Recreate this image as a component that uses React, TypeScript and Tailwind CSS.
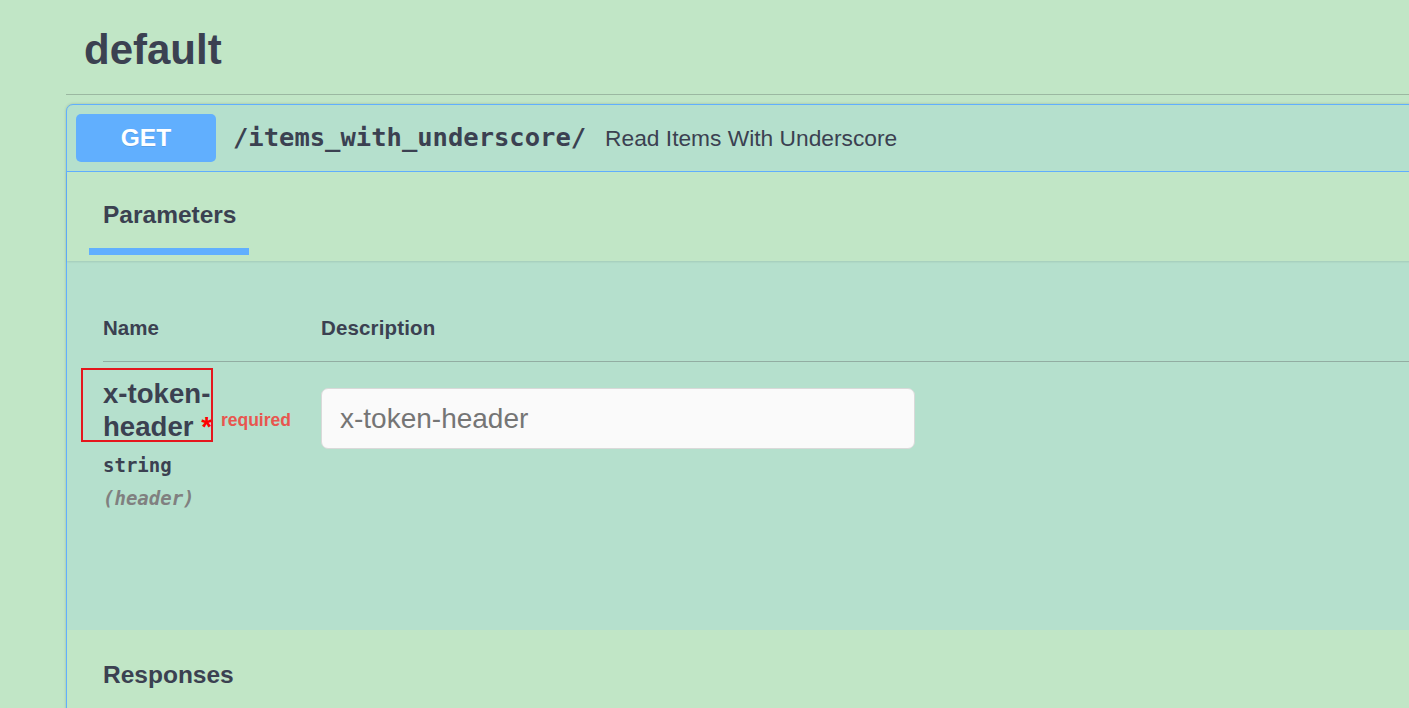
import React from "react";

export default function App() {
  return (
    <div className="w-[1409px] h-[708px] overflow-hidden bg-[#c1e6c6] text-[#3b4151] font-['Liberation_Sans',Arial,sans-serif]">
      <div className="pl-[66px]">
        <div className="w-[1360px]">
          {/* Tag heading */}
          <div className="h-[95px] border-b border-[#9bb8a1] pl-[18px] pt-[29px]">
            <h3 className="text-[42px] font-bold leading-[42px]">default</h3>
          </div>

          {/* Operation block */}
          <div className="mt-[9px] border border-[#61affe] rounded-[7px] bg-[#b5e0cd] shadow-[0_0_3px_rgba(0,0,0,0.19)]">
            {/* Summary */}
            <div className="h-[67px] border-b border-[#61affe] flex items-center pl-[9px]">
              <div className="w-[140px] h-[48px] rounded-[5px] bg-[#61affe] flex items-center justify-center text-white text-[24.5px] font-bold [text-shadow:0_1px_0_rgba(0,0,0,0.1)]">
                GET
              </div>
              <span className="ml-[17px] font-['DejaVu_Sans_Mono',monospace] font-bold text-[25.5px] leading-none">
                /items_with_underscore/
              </span>
              <span className="ml-[19px] text-[22.75px] leading-none">Read Items With Underscore</span>
            </div>

            {/* Section header: Parameters tab */}
            <div className="h-[89px] bg-[#c1e6c6] shadow-[0_1px_2px_rgba(0,0,0,0.1)] pl-[36px] pt-[29px] relative">
              <div className="text-[24.5px] font-bold leading-[28px]">Parameters</div>
              <div className="mt-[19px] -ml-[14px] w-[160px] h-[7px] bg-[#61affe]" />
            </div>

            {/* Parameters body */}
            <div className="h-[369px] pl-[36px] pt-[55px]">
              <div className="flex border-b border-[#92ada2] pb-[21px]">
                <div className="w-[218px] text-[20.5px] font-bold leading-[24px]">Name</div>
                <div className="text-[20.5px] font-bold leading-[24px] tracking-[0.15px]">Description</div>
              </div>
              <div className="flex pt-[15px]">
                <div className="w-[218px]">
                  <div className="relative">
                    <div className="text-[27.6px] font-bold leading-[33px] whitespace-nowrap">
                      x-token-
                      <br />
                      header<span className="text-[#ff0000]">&nbsp;*</span>
                      <span className="relative top-[-10px] pl-[9px] text-[17.5px] text-[#e8564f]">required</span>
                    </div>
                    <div className="absolute left-[-22px] top-[-9px] w-[132px] h-[74px] border-2 border-[#e5161d]" />
                  </div>
                  <div className="mt-[2px] font-['DejaVu_Sans_Mono',monospace] font-bold text-[19px] leading-[33px]">
                    string
                  </div>
                  <div className="font-['DejaVu_Sans_Mono',monospace] font-bold italic text-[19px] leading-[33px] text-[#808080]">
                    (header)
                  </div>
                </div>
                <div className="pt-[11px]">
                  <input
                    type="text"
                    placeholder="x-token-header"
                    className="w-[594px] h-[61px] border border-[#d9d9d9] rounded-[7px] bg-[#fafafa] px-[18px] text-[28px] placeholder:text-[#757575] outline-none font-['Liberation_Sans',Arial,sans-serif]"
                  />
                </div>
              </div>
            </div>

            {/* Responses header */}
            <div className="h-[120px] bg-[#c1e6c6] pl-[36px] pt-[31px]">
              <div className="text-[24.5px] font-bold leading-[28px]">Responses</div>
            </div>
          </div>
        </div>
      </div>
    </div>
  );
}
